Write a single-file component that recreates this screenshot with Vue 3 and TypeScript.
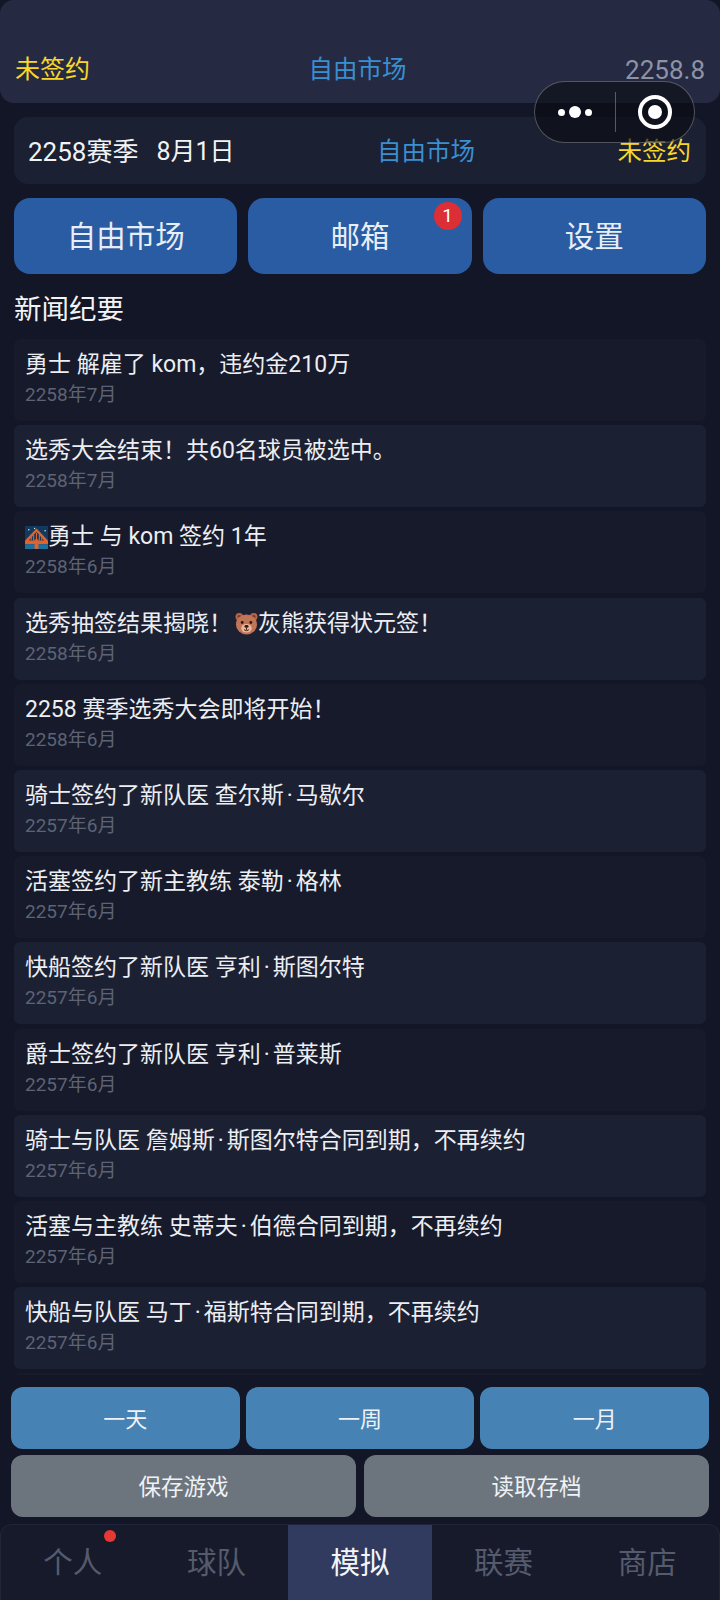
<script setup lang="ts">
interface NewsItem { text: string; date: string; emoji?: string; before?: string }
const news: NewsItem[] = [
  { text: '勇士 解雇了 kom，违约金210万', date: '2258年7月' },
  { text: '选秀大会结束！共60名球员被选中。', date: '2258年7月' },
  { emoji: 'bridge', text: '勇士 与 kom 签约 1年', date: '2258年6月' },
  { before: '选秀抽签结果揭晓！', emoji: 'bear', text: '灰熊获得状元签！', date: '2258年6月' },
  { text: '2258 赛季选秀大会即将开始！', date: '2258年6月' },
  { text: '骑士签约了新队医 查尔斯·马歇尔', date: '2257年6月' },
  { text: '活塞签约了新主教练 泰勒·格林', date: '2257年6月' },
  { text: '快船签约了新队医 亨利·斯图尔特', date: '2257年6月' },
  { text: '爵士签约了新队医 亨利·普莱斯', date: '2257年6月' },
  { text: '骑士与队医 詹姆斯·斯图尔特合同到期，不再续约', date: '2257年6月' },
  { text: '活塞与主教练 史蒂夫·伯德合同到期，不再续约', date: '2257年6月' },
  { text: '快船与队医 马丁·福斯特合同到期，不再续约', date: '2257年6月' },
  { text: '', date: '' }
]
const menu = ['自由市场', '邮箱', '设置']
const sim = ['一天', '一周', '一月']
const saves = ['保存游戏', '读取存档']
const tabs = ['个人', '球队', '模拟', '联赛', '商店']
// Split around the middle dot so it can carry its own side margins.
const parts = (s: string): string[] => s.split(/(·)/)
</script>

<template>
  <div class="app">
    <header class="top">
      <span class="yellow">未签约</span>
      <span class="blue">自由市场</span>
      <span class="version">2258.8</span>
    </header>

    <section class="info">
      <span class="date"><span class="season">2258赛季</span><span>8月1日</span></span>
      <span class="blue">自由市场</span>
      <span class="yellow small">未签约</span>
    </section>

    <nav class="menu">
      <button v-for="m in menu" :key="m" class="menu-btn">
        {{ m }}
        <span v-if="m === '邮箱'" class="badge">1</span>
      </button>
    </nav>

    <h2 class="title">新闻纪要</h2>

    <ul class="news">
      <li v-for="(n, i) in news" :key="i" class="item" :class="{ alt: i % 2 === 1 }">
        <div class="line">
          <span v-if="n.before">{{ n.before }}</span>
          <svg v-if="n.emoji === 'bridge'" class="emoji" viewBox="0 0 24 24">
            <rect width="24" height="24" fill="#123a5e" />
            <circle cx="4" cy="4" r="0.8" fill="#dfe8f0" />
            <circle cx="10" cy="2.5" r="0.7" fill="#dfe8f0" />
            <circle cx="21" cy="5" r="0.8" fill="#dfe8f0" />
            <path d="M0 15 L12 2.5 L24 15 V19 H0 Z" fill="#e2622c" />
            <path d="M12 6 L4 15 H20 Z" fill="#123a5e" />
            <path d="M6.5 15 V11 M9 15 V9 M12 15 V7 M15 15 V9 M17.5 15 V11" stroke="#e2622c" stroke-width="1.1" />
            <rect y="19" width="24" height="5" fill="#1c6f9e" />
            <rect x="10" y="14" width="4" height="10" fill="#e2622c" />
          </svg>
          <svg v-if="n.emoji === 'bear'" class="emoji bear" viewBox="0 0 24 24">
            <circle cx="4.5" cy="5" r="4" fill="#b5654a" />
            <circle cx="19.5" cy="5" r="4" fill="#b5654a" />
            <circle cx="4.5" cy="5" r="2" fill="#7a3d2c" />
            <circle cx="19.5" cy="5" r="2" fill="#7a3d2c" />
            <ellipse cx="12" cy="13" rx="11" ry="10.5" fill="#c17557" />
            <ellipse cx="12" cy="17" rx="5.5" ry="4.5" fill="#eeb59a" />
            <circle cx="7.5" cy="11" r="1.5" fill="#2c1710" />
            <circle cx="16.5" cy="11" r="1.5" fill="#2c1710" />
            <ellipse cx="12" cy="15" rx="2.2" ry="1.5" fill="#2c1710" />
            <path d="M12 16.5 V18.5 M9.5 18.5 Q12 20.5 14.5 18.5" stroke="#2c1710" stroke-width="1" fill="none" />
          </svg>
          <span class="txt"><span v-for="(p, k) in parts(n.text)" :key="k" :class="{ mid: p === '·' }">{{ p }}</span></span>
        </div>
        <div class="sub">{{ n.date }}</div>
      </li>
    </ul>

    <div class="actions">
      <div class="row">
        <button v-for="s in sim" :key="s" class="act primary">{{ s }}</button>
      </div>
      <div class="row two">
        <button v-for="s in saves" :key="s" class="act gray">{{ s }}</button>
      </div>
    </div>

    <footer class="tabs">
      <div v-for="t in tabs" :key="t" class="tab" :class="{ active: t === '模拟' }">
        {{ t }}
        <span v-if="t === '个人'" class="dot"></span>
      </div>
    </footer>

    <div class="capsule">
      <div class="more"><i></i><i class="big"></i><i></i></div>
      <div class="sep"></div>
      <div class="target"><i></i></div>
    </div>
  </div>
</template>

<style>
html, body { margin: 0; background: #121626; }
</style>

<style scoped>
.app {
  position: relative;
  width: 720px;
  height: 1600px;
  overflow: hidden;
  display: flex;
  flex-direction: column;
  background: #121626;
  color: #f2f3f5;
  font-family: Roboto, "Noto Sans CJK SC", sans-serif;
}
.top {
  flex: none;
  height: 103px;
  box-sizing: border-box;
  padding: 37px 15px 0;
  display: flex;
  justify-content: space-between;
  align-items: center;
  background: #252a42;
  border-radius: 14px;
  font-size: 25px;
  line-height: 40px;
}
.yellow { color: #f8d62a; }
.yellow.small { font-size: 24.5px; }
.blue { color: #3a8fd1; font-size: 24.5px; }
.version { color: #8d93a6; font-size: 26px; }
.info {
  flex: none;
  height: 67px;
  margin: 14px 14px 0;
  padding: 0 15px 2px 14px;
  box-sizing: border-box;
  display: flex;
  justify-content: space-between;
  align-items: center;
  background: #1b2033;
  border-radius: 14px;
  font-size: 25px;
}
.date { display: flex; gap: 18px; }
.season { font-size: 26px; }
.menu {
  flex: none;
  margin: 14px 14px 0;
  display: grid;
  grid-template-columns: 1fr 1fr 1fr;
  gap: 11px;
}
.menu-btn {
  position: relative;
  height: 76px;
  padding: 0 0 4px;
  border: 0;
  border-radius: 16px;
  background: #2a5ca3;
  color: #e8eef7;
  font: inherit;
  font-size: 29.5px;
}
.badge {
  position: absolute;
  top: 4px;
  right: 10px;
  width: 28px;
  height: 28px;
  border-radius: 50%;
  background: #dc2e35;
  color: #fff;
  font-size: 19px;
  line-height: 28px;
  text-align: center;
}
.title {
  flex: none;
  margin: 16px 14px 0;
  font-size: 27.5px;
  font-weight: 400;
  line-height: 40px;
}
.news {
  flex: 1;
  min-height: 0;
  overflow: hidden;
  list-style: none;
  margin: 9px 14px 0;
  padding: 0;
  display: flex;
  flex-direction: column;
  gap: 4.2px;
}
.item {
  flex: none;
  height: 82px;
  box-sizing: border-box;
  padding: 9px 11px 0;
  background: #161a2a;
  border-radius: 6px;
}
.item.alt { background: #1c2033; }
.line {
  display: flex;
  align-items: center;
  height: 34px;
  font-size: 23px;
  line-height: 34px;
  color: #eceef2;
  white-space: pre;
}
.mid { margin: 0 3px; }
.emoji { width: 23px; height: 23px; flex: none; }
.bear { margin-left: 3px; }
.sub {
  font-size: 19px;
  line-height: 26px;
  color: #5d6374;
}
.actions {
  flex: none;
  padding: 12px 11px 7px;
  display: flex;
  flex-direction: column;
  gap: 6px;
  background: #121626;
}
.row { display: grid; grid-template-columns: 1fr 1fr 1fr; gap: 6px; }
.row.two { grid-template-columns: 1fr 1fr; gap: 8px; }
.act {
  height: 62px;
  padding: 0 0 2px;
  border: 0;
  border-radius: 12px;
  color: #eef2f6;
  font: inherit;
  font-size: 22px;
}
.gray { font-size: 22.5px; }
.primary { background: #4682b4; }
.gray { background: #6c757d; }
.tabs {
  flex: none;
  height: 76px;
  box-sizing: border-box;
  display: grid;
  grid-template-columns: repeat(5, 1fr);
  background: #161a2a;
  border: 1px solid #20263a;
  border-bottom: 0;
  border-radius: 12px 12px 0 0;
  overflow: hidden;
}
.tab {
  position: relative;
  display: flex;
  align-items: center;
  justify-content: center;
  padding-bottom: 6px;
  font-size: 29.5px;
  color: #555b6c;
}
.tab.active { background: #313a5f; color: #f4f5f8; }
.dot {
  position: absolute;
  top: 5px;
  left: 103px;
  width: 12px;
  height: 12px;
  border-radius: 50%;
  background: #e53935;
}
.capsule {
  position: absolute;
  left: 534px;
  top: 81px;
  width: 161px;
  height: 62px;
  box-sizing: border-box;
  display: flex;
  align-items: center;
  border: 1.5px solid rgba(255, 255, 255, 0.28);
  border-radius: 32px;
  background: rgba(10, 11, 18, 0.62);
}
.more {
  width: 80px;
  display: flex;
  align-items: center;
  justify-content: center;
  gap: 4px;
}
.more i { width: 7px; height: 7px; border-radius: 50%; background: #fff; }
.more i.big { width: 12px; height: 12px; }
.sep { width: 1px; height: 40px; background: rgba(255, 255, 255, 0.3); }
.target {
  flex: 1;
  display: flex;
  align-items: center;
  justify-content: center;
}
.target i {
  width: 34px;
  height: 34px;
  box-sizing: border-box;
  border: 4px solid #fff;
  border-radius: 50%;
  display: flex;
  align-items: center;
  justify-content: center;
}
.target i::after {
  content: "";
  width: 14px;
  height: 14px;
  border-radius: 50%;
  background: #fff;
}
</style>
